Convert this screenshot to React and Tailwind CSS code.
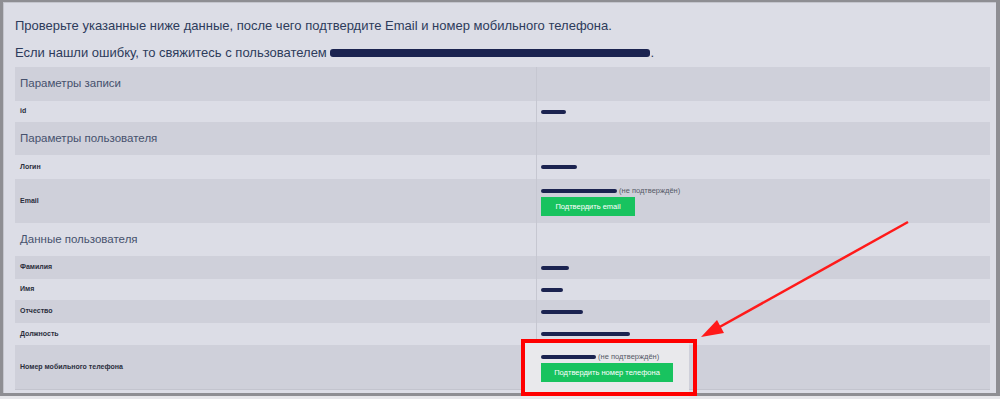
import React from 'react';

const rows = [
  { type: 'head', label: 'Параметры записи', h: 'h-[34px]' },
  { type: 'field', label: 'id', h: 'h-[21px]', blob: 'w-[25px]' },
  { type: 'head', label: 'Параметры пользователя', h: 'h-[33px]' },
  { type: 'field', label: 'Логин', h: 'h-[24px]', blob: 'w-[36px]' },
  { type: 'confirm', label: 'Email', h: 'h-[44px]', blob: 'w-[76px]', button: 'Подтвердить email', btn: 'w-[94px]' },
  { type: 'head', label: 'Данные пользователя', h: 'h-[33px]' },
  { type: 'field', label: 'Фамилия', h: 'h-[23px]', blob: 'w-[28px]' },
  { type: 'field', label: 'Имя', h: 'h-[21px]', blob: 'w-[22px]' },
  { type: 'field', label: 'Отчество', h: 'h-[23px]', blob: 'w-[42px]' },
  { type: 'field', label: 'Должность', h: 'h-[22px]', blob: 'w-[89px]' },
  { type: 'confirm', label: 'Номер мобильного телефона', h: 'h-[44px]', blob: 'w-[55px]', button: 'Подтвердить номер телефона', btn: 'w-[132px]', marked: true },
];

const Blob = ({ w }) => <span className={`inline-block ${w} h-[4px] rounded-full bg-[#1b2350]`} />;

const App = () => {
  return (
    <div className="relative w-[1000px] h-[399px] bg-[#e6e6ea] overflow-hidden" style={{ fontFamily: '"Liberation Sans", Arial, sans-serif' }}>
      <div className="h-[396px] border-l-[3px] border-t-[2px] border-r-[4px] border-b-[3px] border-[#8e8e93] bg-[#dcdde6] pl-[12px] shadow-[inset_1px_1px_0_#c4c5cd]">
        <p className="pt-[15px] text-[13px] leading-[18px] text-[#2d3b5b]">
          Проверьте указанные ниже данные, после чего подтвердите Email и номер мобильного телефона.
        </p>
        <p className="mt-[9px] flex items-center text-[13px] leading-[18px] text-[#2d3b5b]">
          Если нашли ошибку, то свяжитесь с пользователем&nbsp;
          <span className="inline-block w-[320px] h-[8px] rounded-[3px] bg-[#1b2350]" />
          <span>.</span>
        </p>
        <div className="mt-[5px] w-[975px] border-b border-[#c3c4ce]">
          {rows.map((r, i) => (
            <div key={i} className={`grid grid-cols-[522px_1fr] ${r.h} ${i % 2 === 0 ? 'bg-[#cfd0da]' : 'bg-[#dcdde6]'}`}>
              <div className="flex items-center pl-[5px] border-r border-[#c6c7d1]">
                {r.type === 'head' ? (
                  <span className="text-[11.5px] text-[#46516d]">{r.label}</span>
                ) : (
                  <span className="text-[7px] font-bold text-[#2a2e3c]">{r.label}</span>
                )}
              </div>
              {r.type === 'confirm' ? (
                <div className="relative">
                  {r.marked && <div className="absolute left-[-16px] w-[168px] top-[-4px] bottom-[-9px] bg-[#e9e9ec]" />}
                  <div className="relative flex flex-col pl-[4px] pt-[8px]">
                    <div className="flex items-center gap-[2px] h-[8px]">
                      <Blob w={r.blob} />
                      <span className="text-[7.5px] text-[#555a66]">(не подтверждён)</span>
                    </div>
                    <div className={`mt-[2px] ${r.btn} h-[19px] flex items-center justify-center bg-[#18c35f] text-white text-[7.5px]`}>
                      {r.button}
                    </div>
                  </div>
                </div>
              ) : (
                <div className="flex items-center pl-[4px]">
                  {r.blob && <Blob w={r.blob} />}
                </div>
              )}
            </div>
          ))}
        </div>
      </div>

      <div className="absolute left-[521px] top-[339px] w-[176px] h-[57px] border-4 border-[#ff0000]" />
      <svg className="absolute left-0 top-0" width="1000" height="399" viewBox="0 0 1000 399">
        <line x1="908" y1="222" x2="716" y2="329" stroke="#ff1a1a" strokeWidth="2.5" />
        <polygon points="701,337 724,333 717,320" fill="#ff1a1a" />
      </svg>
    </div>
  );
};

export default App;
